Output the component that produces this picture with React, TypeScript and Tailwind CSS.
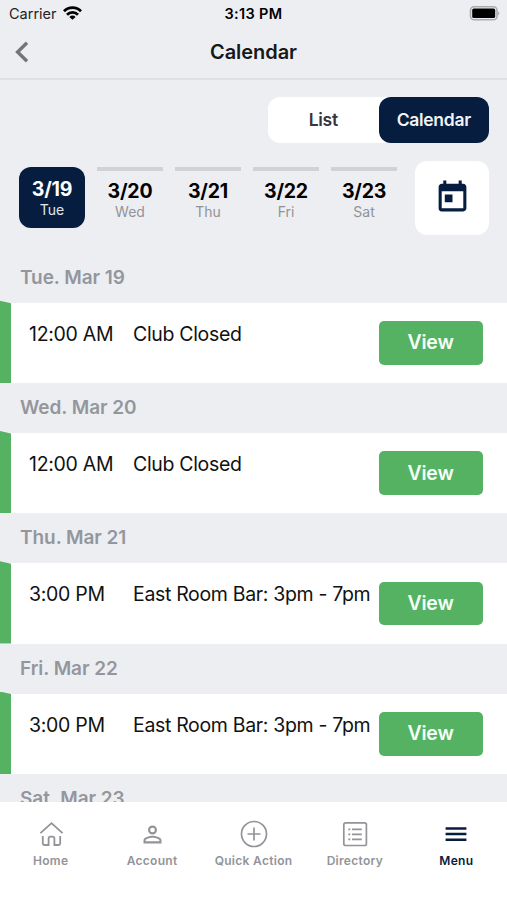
import clsx from "clsx";
import React from "react";
import { MdPersonOutline, MdToday } from "react-icons/md";

const days = [
  { date: "3/19", name: "Tue" },
  { date: "3/20", name: "Wed" },
  { date: "3/21", name: "Thu" },
  { date: "3/22", name: "Fri" },
  { date: "3/23", name: "Sat" },
];

const events = [
  { day: "Tue. Mar 19", time: "12:00 AM", title: "Club Closed" },
  { day: "Wed. Mar 20", time: "12:00 AM", title: "Club Closed" },
  { day: "Thu. Mar 21", time: "3:00 PM", title: "East Room Bar: 3pm - 7pm" },
  { day: "Fri. Mar 22", time: "3:00 PM", title: "East Room Bar: 3pm - 7pm" },
];

const HomeIcon = () => (
  <svg width="26" height="28" viewBox="0 0 26 28" fill="none" stroke="currentColor" strokeWidth="1.8">
    <path d="M2.4 13.2L13.5 3.2L24.6 13.2" />
    <path d="M4.8 16V23.5Q4.8 25 6.3 25H10.6V18.5Q10.6 16.6 12.5 16.6H14.5Q16.4 16.6 16.4 18.5V25H20.7Q22.2 25 22.2 23.5V16" />
  </svg>
);

const PlusIcon = () => (
  <svg width="28" height="28" viewBox="0 0 28 28" fill="none" stroke="currentColor" strokeWidth="1.7">
    <circle cx="14" cy="14" r="12.5" />
    <path d="M14 7.5V20.5M7.5 14H20.5" />
  </svg>
);

const DirectoryIcon = () => (
  <svg width="26" height="28" viewBox="0 0 26 28" fill="none" stroke="currentColor" strokeWidth="1.7">
    <rect x="1.8" y="2.9" width="22.6" height="22.6" rx="1.8" />
    <path d="M6.3 9.4H8.3M6.3 14.4H8.3M6.3 19.4H8.3M10 9.4H19.8M10 14.4H19.8M10 19.4H19.8" />
  </svg>
);

const MenuIcon = () => (
  <svg width="22" height="28" viewBox="0 0 22 28" stroke="currentColor" strokeWidth="2.5">
    <path d="M.6 8.4H21.4M.6 14H21.4M.6 19.7H21.4" />
  </svg>
);

const tabs = [
  { label: "Home", icon: <HomeIcon /> },
  { label: "Account", icon: <MdPersonOutline size={27} /> },
  { label: "Quick Action", icon: <PlusIcon /> },
  { label: "Directory", icon: <DirectoryIcon /> },
  { label: "Menu", icon: <MenuIcon />, active: true },
];

const StatusBar = () => (
  <div className="grid h-[27px] grid-cols-3 items-center pl-[9px] pr-[7px] text-black">
    <div className="flex items-center gap-[6px]">
      <span className="text-[14.5px] text-[#222]">Carrier</span>
      <svg className="-mt-[2px]" width="19" height="14" viewBox="0 0 19 14" fill="none" stroke="black" strokeWidth="2.8">
        <path d="M1 5.2A12 12 0 0 1 18 5.2" />
        <path d="M4 8.7A7.8 7.8 0 0 1 15 8.7" />
        <path d="M9.5 13.8L6.4 10.9A4.4 4.4 0 0 1 12.6 10.9Z" fill="black" stroke="none" />
      </svg>
    </div>
    <div className="-ml-[2px] text-center text-[14.5px] font-semibold tracking-[0.35px]">3:13 PM</div>
    <svg className="justify-self-end" width="31" height="15" viewBox="0 0 31 15">
      <rect x="1.5" y="0.8" width="26.5" height="13" rx="3.6" fill="none" stroke="#aaabad" strokeWidth="1.6" />
      <rect x="3.2" y="2.6" width="23" height="9.4" rx="1.6" fill="black" />
      <path d="M29 5.2Q31.4 7.3 29 9.4Z" fill="#aaabad" />
    </svg>
  </div>
);

const Header = () => (
  <div className="grid h-[53px] grid-cols-[60px_1fr_60px] items-center border-b-2 border-[#dfe0e3]">
    <svg className="-mt-[2px] ml-[14px]" width="16" height="22" viewBox="0 0 16 22" fill="none" stroke="#757575" strokeWidth="3.4">
      <path d="M13 1.8L3.6 11L13 20.2" />
    </svg>
    <h1 className="-mt-px text-center text-[20px] font-semibold tracking-[-0.05px] text-[#17181a]">Calendar</h1>
  </div>
);

const Toggle = () => (
  <div className="ml-auto mr-[18px] flex h-[45.5px] w-[221px] rounded-[12px] bg-white text-[17.5px] font-semibold tracking-[-0.3px]">
    <button className="w-[110.5px] text-[#35353d]">List</button>
    <button className="w-[110.5px] rounded-[12px] bg-[#061d40] text-[#f1f3f7]">Calendar</button>
  </div>
);

const DayStrip = () => (
  <div className="mt-[18px] flex h-[74px] pl-[19px] pr-[18px]">
    <div className="flex gap-[12px] pt-[6px]">
      {days.map((day, i) => (
        <div
          key={day.date}
          className={clsx(
            "flex w-[66px] flex-col items-center",
            i === 0
              ? "h-[61px] rounded-[12px] bg-[#061d40] pt-[10px] text-white"
              : "border-t-[4px] border-[#d1d2d5] pt-[8px] text-black"
          )}
        >
          <span className="text-[19.5px] font-bold leading-[24px] tracking-[-0.2px]">{day.date}</span>
          <span className={clsx("text-[14px] leading-[18px]", i === 0 ? "text-[#e3e6ec]" : "text-[#929398]")}>
            {day.name}
          </span>
        </div>
      ))}
    </div>
    <button className="ml-auto flex h-[74px] w-[74px] items-center justify-center rounded-[12px] bg-white text-[#061d40]">
      <MdToday size={37} />
    </button>
  </div>
);

const DayHeading = ({ label }: { label: string }) => (
  <h2 className="h-[50px] pl-[20px] text-[19px] font-semibold leading-[50px] tracking-[-0.05px] text-[#94969d]">{label}</h2>
);

const EventRow = ({ time, title }: { time: string; title: string }) => (
  <div className="flex h-[80.3px] bg-white text-[19.5px] text-[#111]">
    <div className="-mt-[2px] w-[11px] bg-[#56b263] [clip-path:polygon(0_0,100%_2.5px,100%_100%,0_100%)]" />
    <div className="ml-[18px] w-[104px] whitespace-nowrap pt-[17px] leading-[28px] tracking-[-0.3px]">{time}</div>
    <div className="flex-1 whitespace-nowrap pt-[17px] leading-[28px] tracking-[-0.33px]">{title}</div>
    <button className="mr-[24.5px] mt-[18.5px] h-[43.5px] w-[104px] rounded-[5px] bg-[#56b263] font-semibold tracking-[-0.2px] text-[#f5fff6]">
      View
    </button>
  </div>
);

const TabBar = () => (
  <nav className="flex h-[98px] bg-white pt-[18px]">
    {tabs.map((tab) => (
      <div
        key={tab.label}
        className={clsx(
          "flex flex-1 flex-col items-center whitespace-nowrap text-[12px] font-semibold tracking-[0.3px]",
          tab.active ? "text-[#061d40]" : "text-[#929499]"
        )}
      >
        <div className="flex h-[28px] items-center">{tab.icon}</div>
        <span className="mt-[5px] leading-[16px]">{tab.label}</span>
      </div>
    ))}
  </nav>
);

const App = () => {
  return (
    <div className="flex h-[900px] w-[507px] flex-col overflow-hidden bg-[#edeef2] font-['Inter',sans-serif]">
      <StatusBar />
      <Header />
      <main className="min-h-0 flex-1 overflow-hidden pt-[17.4px]">
        <Toggle />
        <DayStrip />
        <div className="mt-[17.8px]">
          {events.map((event) => (
            <section key={event.day}>
              <DayHeading label={event.day} />
              <EventRow time={event.time} title={event.title} />
            </section>
          ))}
          <DayHeading label="Sat. Mar 23" />
        </div>
      </main>
      <TabBar />
    </div>
  );
};

export default App;
